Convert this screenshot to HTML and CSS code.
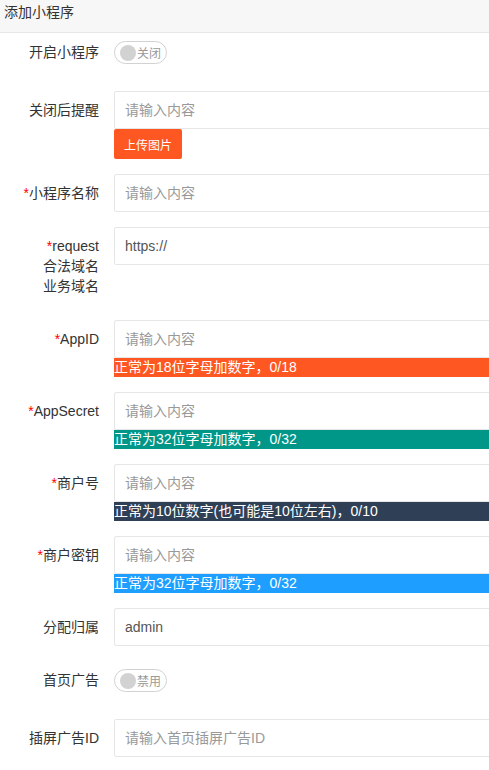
FILE: index.html
```html
<!DOCTYPE html>
<html lang="zh-CN">

<head>
    <meta charset="UTF-8">
    <meta name="viewport" content="width=device-width, initial-scale=1.0">
    <title>添加小程序</title>
    <link rel="stylesheet" href="styles.css">
</head>

<body>

    <!-- Header -->
    <div class="panel-header">添加小程序</div>

    <!-- Form -->
    <form class="app-form">
        <div class="form-item switch-item">
            <label class="form-label">开启小程序</label>
            <div class="input-block">
                <span class="form-switch"><i class="switch-knob"></i><em>关闭</em></span>
            </div>
        </div>

        <div class="form-item">
            <label class="form-label">关闭后提醒</label>
            <div class="input-block">
                <input class="form-input" type="text" placeholder="请输入内容">
                <button type="button" class="btn-upload">上传图片</button>
            </div>
        </div>

        <div class="form-item">
            <label class="form-label"><span class="req">*</span>小程序名称</label>
            <div class="input-block">
                <input class="form-input" type="text" placeholder="请输入内容">
            </div>
        </div>

        <div class="form-item">
            <label class="form-label"><span class="req">*</span>request<br>合法域名<br>业务域名</label>
            <div class="input-block">
                <input class="form-input" type="text" value="https://">
            </div>
        </div>

        <div class="form-item">
            <label class="form-label"><span class="req">*</span>AppID</label>
            <div class="input-block">
                <input class="form-input" type="text" placeholder="请输入内容">
                <div class="tip tip-orange">正常为18位字母加数字，0/18</div>
            </div>
        </div>

        <div class="form-item">
            <label class="form-label"><span class="req">*</span>AppSecret</label>
            <div class="input-block">
                <input class="form-input" type="text" placeholder="请输入内容">
                <div class="tip tip-green">正常为32位字母加数字，0/32</div>
            </div>
        </div>

        <div class="form-item">
            <label class="form-label"><span class="req">*</span>商户号</label>
            <div class="input-block">
                <input class="form-input" type="text" placeholder="请输入内容">
                <div class="tip tip-dark">正常为10位数字(也可能是10位左右)，0/10</div>
            </div>
        </div>

        <div class="form-item">
            <label class="form-label"><span class="req">*</span>商户密钥</label>
            <div class="input-block">
                <input class="form-input" type="text" placeholder="请输入内容">
                <div class="tip tip-blue">正常为32位字母加数字，0/32</div>
            </div>
        </div>

        <div class="form-item">
            <label class="form-label">分配归属</label>
            <div class="input-block">
                <input class="form-input" type="text" value="admin">
            </div>
        </div>

        <div class="form-item switch-item">
            <label class="form-label">首页广告</label>
            <div class="input-block">
                <span class="form-switch"><i class="switch-knob"></i><em>禁用</em></span>
            </div>
        </div>

        <div class="form-item">
            <label class="form-label">插屏广告ID</label>
            <div class="input-block">
                <input class="form-input" type="text" placeholder="请输入首页插屏广告ID">
            </div>
        </div>
    </form>

</body>

</html>
```

FILE: styles.css
```css
/* General Styles */
html,
body {
    overflow: hidden;
}

body {
    font-family: 'Liberation Sans', 'Noto Sans CJK SC', sans-serif;
    font-size: 14px;
    color: #333;
    margin: 0;
    padding: 0;
    background-color: #fff;
}

/* Header */
.panel-header {
    height: 33px;
    padding: 2px 4px 0;
    box-sizing: border-box;
    line-height: 20px;
    background-color: #f7f7f7;
    border-bottom: 1px solid #e8e8e8;
    color: #333;
}

/* Form - wider than the window, inputs run off the right edge */
.app-form {
    width: 640px;
    margin: 0;
}

.form-item {
    display: flex;
    align-items: flex-start;
    margin-bottom: 15px;
}

.switch-item {
    min-height: 43px;
}

.form-label {
    width: 114px;
    flex-shrink: 0;
    box-sizing: border-box;
    padding: 9px 15px 9px 0;
    line-height: 20px;
    text-align: right;
    color: #333;
}

.req {
    color: #f00;
}

.input-block {
    flex: 1;
    display: flex;
    flex-direction: column;
    align-items: flex-start;
}

.form-input {
    width: 100%;
    height: 38px;
    box-sizing: border-box;
    margin: 0;
    padding: 0 10px;
    border: 1px solid #e6e6e6;
    border-radius: 2px;
    font-family: inherit;
    font-size: 14px;
    color: #555;
    background-color: #fff;
    outline: none;
}

.form-input::placeholder {
    color: #999;
}

.btn-upload {
    height: 30px;
    padding: 0 10px;
    border: none;
    border-radius: 2px;
    background-color: #ff5722;
    color: #fff;
    font-family: inherit;
    font-size: 12px;
    cursor: pointer;
}

/* Switch */
.form-switch {
    display: inline-flex;
    align-items: center;
    height: 21px;
    margin-top: 8px;
    padding: 0 5px;
    border: 1px solid #d2d2d2;
    border-radius: 20px;
    background-color: #fff;
}

.switch-knob {
    width: 16px;
    height: 16px;
    border-radius: 50%;
    background-color: #d2d2d2;
}

.form-switch em {
    margin-left: 1px;
    font-style: normal;
    font-size: 12px;
    color: #999;
}

/* Hint bars under inputs */
.tip {
    width: 100%;
    height: 19px;
    line-height: 19px;
    color: #fff;
    white-space: nowrap;
}

.tip-orange {
    background-color: #ff5722;
}

.tip-green {
    background-color: #009688;
}

.tip-dark {
    background-color: #2f4056;
}

.tip-blue {
    background-color: #1e9fff;
}
```
